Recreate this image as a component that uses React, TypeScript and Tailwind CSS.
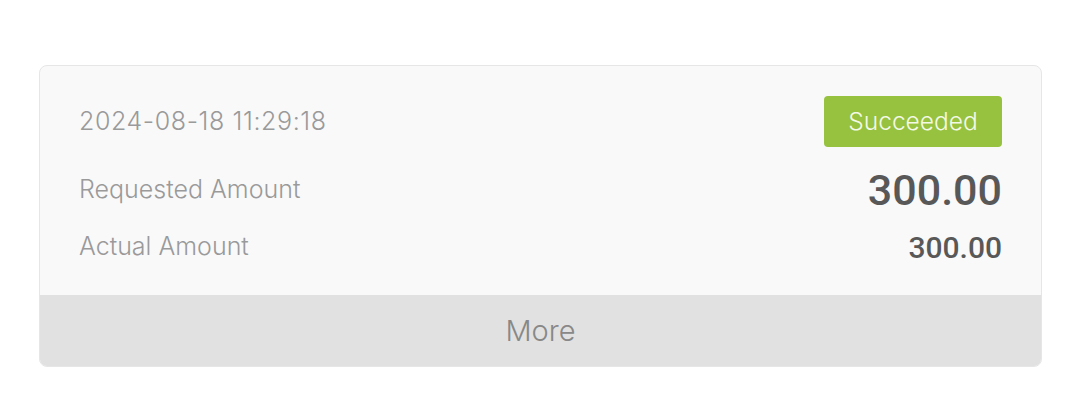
export default function App() {
  return (
    <div className="w-[1080px] h-[416px] bg-white pt-[65px] pl-[39px]" style={{ fontFamily: 'Inter, "Noto Sans", sans-serif' }}>
      <div className="w-[1003px] rounded-[8px] border border-[#e6e6e6] bg-[#f9f9fa] overflow-hidden">
        {/* Top row: date + status */}
        <div className="flex items-center justify-between px-[39px] pt-[30px]">
          <span className="text-[25px] font-light text-[#9a9a9a] tracking-[0.6px]">2024-08-18 11:29:18</span>
          <span className="h-[51px] w-[178px] rounded-[4px] bg-[#97c23f] text-[#f4f9e6] text-[24.5px] font-light flex items-center justify-center">
            Succeeded
          </span>
        </div>

        <div className="flex items-center justify-between px-[39px] h-[60px] mt-[13px]">
          <span className="text-[25px] font-light text-[#9a9a9a]">Requested Amount</span>
          <span className="text-[43px] font-medium text-[#585858] font-['Roboto',sans-serif]">300.00</span>
        </div>

        <div className="flex items-center justify-between px-[39px] h-[54px]">
          <span className="text-[25px] font-light text-[#9a9a9a]">Actual Amount</span>
          <span className="text-[30px] font-medium text-[#585858] font-['Roboto',sans-serif]">300.00</span>
        </div>

        <div className="h-[21px]" />

        <button className="w-full h-[71px] bg-[#e1e1e1] flex items-center justify-center text-[29px] font-light text-[#888888]">
          More
        </button>
      </div>
    </div>
  );
}
